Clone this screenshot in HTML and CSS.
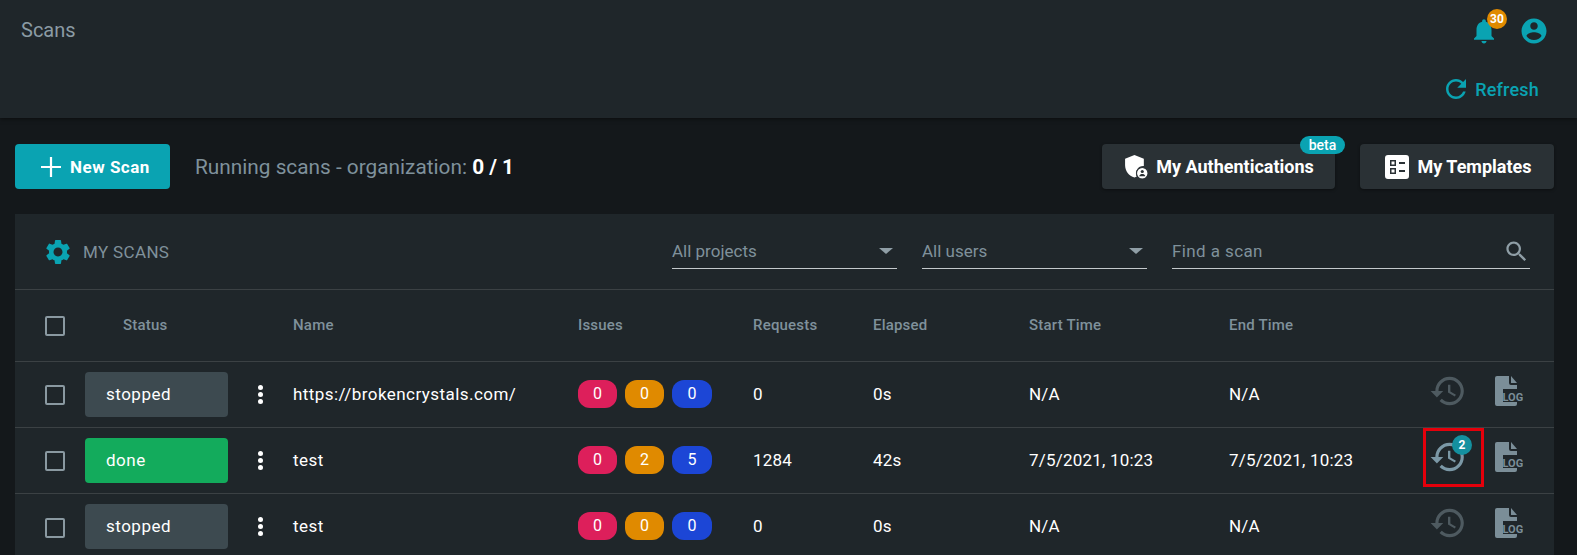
FILE: index.html
```html
<!DOCTYPE html>
<html lang="en">
<head>
<meta charset="utf-8">
<title>Scans</title>
<link rel="stylesheet" href="styles.css">
</head>
<body>
<header class="topbar">
  <div class="topbar-row">
    <h1 class="page-title">Scans</h1>
    <div class="top-icons">
      <span class="bell">
        <svg class="ic-30" viewBox="0 0 24 24"><path d="M12 22c1.1 0 2-.9 2-2h-4c0 1.1.89 2 2 2zm6-6v-5c0-3.07-1.64-5.64-4.5-6.32V4c0-.83-.67-1.5-1.5-1.5s-1.5.67-1.5 1.5v.68C7.63 5.36 6 7.92 6 11v5l-2 2v1h16v-1l-2-2z"/></svg>
        <span class="bell-badge">30</span>
      </span>
      <svg class="ic-30" viewBox="0 0 24 24"><path d="M12 2C6.48 2 2 6.48 2 12s4.48 10 10 10 10-4.48 10-10S17.52 2 12 2zm0 3c1.66 0 3 1.34 3 3s-1.34 3-3 3-3-1.34-3-3 1.34-3 3-3zm0 14.2c-2.5 0-4.71-1.28-6-3.22.03-1.99 4-3.08 6-3.08 1.99 0 5.97 1.09 6 3.08-1.29 1.94-3.5 3.22-6 3.22z"/></svg>
    </div>
  </div>
  <div class="refresh">
    <svg class="ic-30" viewBox="0 0 24 24"><path d="M17.65 6.35C16.2 4.9 14.21 4 12 4c-4.42 0-7.99 3.58-7.99 8s3.57 8 7.99 8c3.73 0 6.84-2.55 7.73-6h-2.08c-.82 2.33-3.04 4-5.65 4-3.31 0-6-2.69-6-6s2.69-6 6-6c1.66 0 3.14.69 4.22 1.78L13 11h7V4l-2.35 2.35z"/></svg>
    <span>Refresh</span>
  </div>
</header>

<main class="main">
  <div class="toolbar">
    <button class="btn-new">
      <svg class="ic-plus" viewBox="0 0 18 18"><path d="M8 0h2v8h8v2h-8v8H8v-8H0V8h8z"/></svg>
      New Scan
    </button>
    <div class="running">Running scans - organization: <b>0 / 1</b></div>
    <div class="toolbar-right">
      <button class="btn-dark btn-auth">
        <svg class="ic-shield" viewBox="0 0 24 24"><path d="M11 1 2 4.500v6.200c0 5.400 3.600 10.300 9 11.800.8-.2 1.500-.5 2.200-.8A7 7 0 0 1 20 11.600V4.500z"/><circle cx="18.500" cy="18.500" r="5.500"/><circle class="cut" cx="18.500" cy="16.800" r="1.500"/><path class="cut" d="M15.500 21.300c.4-1.500 1.800-2.100 3-2.100s2.600.6 3 2.100z"/></svg>
        My Authentications
        <span class="beta">beta</span>
      </button>
      <button class="btn-dark btn-templates">
        <svg class="ic-24" viewBox="0 0 24 24"><path fill-rule="evenodd" d="M3 0h18a3 3 0 0 1 3 3v18a3 3 0 0 1-3 3H3a3 3 0 0 1-3-3V3a3 3 0 0 1 3-3zm2 5v6h6V5zm1.500 1.500h3v3h-3zM14 7v2h6V7zM5 13v6h6v-6zm1.500 1.500h3v3h-3zM14 15v2h6v-2z"/></svg>
        My Templates
      </button>
    </div>
  </div>

  <section class="panel">
    <div class="panel-head">
      <div class="panel-title">
        <svg class="ic-30" viewBox="0 0 24 24"><path d="M19.140 12.940c.04-.3.06-.61.06-.94 0-.32-.02-.64-.07-.94l2.030-1.580c.18-.14.23-.41.12-.61l-1.920-3.320c-.12-.22-.37-.29-.59-.22l-2.390.96c-.5-.38-1.030-.7-1.620-.94l-.36-2.540c-.04-.24-.24-.41-.48-.41h-3.840c-.24 0-.43.17-.47.41l-.36 2.540c-.59.24-1.130.57-1.620.94l-2.390-.96c-.22-.08-.47 0-.59.22L2.740 8.870c-.12.21-.08.47.12.61l2.030 1.580c-.05.3-.09.63-.09.94s.02.64.07.94l-2.030 1.580c-.18.14-.23.41-.12.61l1.920 3.320c.12.22.37.29.59.22l2.390-.96c.5.38 1.030.7 1.620.94l.36 2.540c.05.24.24.41.48.41h3.840c.24 0 .44-.17.47-.41l.36-2.540c.59-.24 1.130-.56 1.620-.94l2.390.96c.22.08.47 0 .59-.22l1.920-3.320c.12-.22.07-.47-.12-.61l-2.010-1.580zM12 15.600c-1.980 0-3.600-1.620-3.600-3.600s1.620-3.600 3.600-3.600 3.600 1.620 3.600 3.600-1.620 3.600-3.600 3.600z"/></svg>
        <span>MY SCANS</span>
      </div>
      <div class="filters">
        <div class="field field-select"><span>All projects</span><i class="caret"></i></div>
        <div class="field field-select"><span>All users</span><i class="caret"></i></div>
        <div class="field field-search"><span>Find a scan</span>
          <svg class="ic-search" viewBox="0 0 24 24"><path d="M15.500 14h-.79l-.28-.27C15.410 12.590 16 11.110 16 9.500 16 5.910 13.090 3 9.500 3S3 5.910 3 9.500 5.910 16 9.500 16c1.610 0 3.090-.59 4.230-1.570l.27.28v.79l5 4.990L20.490 19l-4.990-5zm-6 0C7.010 14 5 11.990 5 9.500S7.010 5 9.500 5 14 7.010 14 9.500 11.990 14 9.500 14z"/></svg>
        </div>
      </div>
    </div>

    <div class="grid-row head-row">
      <i class="check"></i>
      <span class="th-status">Status</span>
      <span>Name</span>
      <span>Issues</span>
      <span>Requests</span>
      <span>Elapsed</span>
      <span>Start Time</span>
      <span>End Time</span>
    </div>

    <div class="grid-row scan-row">
      <i class="check"></i>
      <div class="status-cell"><span class="status stopped">stopped</span><span class="dots"><i></i><i></i><i></i></span></div>
      <span class="name">https://brokencrystals.com/</span>
      <div class="issues"><span class="pill red">0</span><span class="pill orange">0</span><span class="pill blue">0</span></div>
      <span>0</span><span>0s</span><span>N/A</span><span>N/A</span>
      <div class="actions">
        <span class="hist dim"><svg viewBox="0 0 24 24"><path d="M13 3c-4.970 0-9 4.030-9 9H1l3.890 3.890.07.14L9 12H6c0-3.870 3.130-7 7-7s7 3.130 7 7-3.130 7-7 7c-1.930 0-3.680-.79-4.940-2.060l-1.420 1.420C8.270 19.990 10.510 21 13 21c4.970 0 9-4.030 9-9s-4.030-9-9-9zm-1 5v5l4.280 2.540.72-1.210-3.500-2.080V8H12z"/></svg></span>
        <svg class="log" viewBox="0 0 28 30"><path d="M2 0h12v7a2 2 0 0 0 2 2h6v4H8v13h14v2a2 2 0 0 1-2 2H2a2 2 0 0 1-2-2V2a2 2 0 0 1 2-2z"/><path d="M16 0l6 7h-6z"/><text x="7.500" y="25" class="log-text">LOG</text></svg>
      </div>
    </div>

    <div class="grid-row scan-row">
      <i class="check"></i>
      <div class="status-cell"><span class="status done">done</span><span class="dots"><i></i><i></i><i></i></span></div>
      <span class="name">test</span>
      <div class="issues"><span class="pill red">0</span><span class="pill orange">2</span><span class="pill blue">5</span></div>
      <span>1284</span><span>42s</span><span>7/5/2021, 10:23</span><span>7/5/2021, 10:23</span>
      <div class="actions">
        <span class="hist bright"><svg viewBox="0 0 24 24"><path d="M13 3c-4.970 0-9 4.030-9 9H1l3.890 3.890.07.14L9 12H6c0-3.870 3.130-7 7-7s7 3.130 7 7-3.130 7-7 7c-1.930 0-3.680-.79-4.940-2.060l-1.420 1.420C8.270 19.990 10.510 21 13 21c4.970 0 9-4.030 9-9s-4.030-9-9-9zm-1 5v5l4.280 2.540.72-1.210-3.500-2.080V8H12z"/></svg><span class="hist-badge">2</span><span class="annotation"></span></span>
        <svg class="log" viewBox="0 0 28 30"><path d="M2 0h12v7a2 2 0 0 0 2 2h6v4H8v13h14v2a2 2 0 0 1-2 2H2a2 2 0 0 1-2-2V2a2 2 0 0 1 2-2z"/><path d="M16 0l6 7h-6z"/><text x="7.500" y="25" class="log-text">LOG</text></svg>
      </div>
    </div>

    <div class="grid-row scan-row">
      <i class="check"></i>
      <div class="status-cell"><span class="status stopped">stopped</span><span class="dots"><i></i><i></i><i></i></span></div>
      <span class="name">test</span>
      <div class="issues"><span class="pill red">0</span><span class="pill orange">0</span><span class="pill blue">0</span></div>
      <span>0</span><span>0s</span><span>N/A</span><span>N/A</span>
      <div class="actions">
        <span class="hist dim"><svg viewBox="0 0 24 24"><path d="M13 3c-4.970 0-9 4.030-9 9H1l3.890 3.890.07.14L9 12H6c0-3.870 3.130-7 7-7s7 3.130 7 7-3.130 7-7 7c-1.930 0-3.680-.79-4.940-2.060l-1.420 1.420C8.270 19.990 10.510 21 13 21c4.970 0 9-4.030 9-9s-4.030-9-9-9zm-1 5v5l4.280 2.540.72-1.210-3.500-2.080V8H12z"/></svg></span>
        <svg class="log" viewBox="0 0 28 30"><path d="M2 0h12v7a2 2 0 0 0 2 2h6v4H8v13h14v2a2 2 0 0 1-2 2H2a2 2 0 0 1-2-2V2a2 2 0 0 1 2-2z"/><path d="M16 0l6 7h-6z"/><text x="7.500" y="25" class="log-text">LOG</text></svg>
      </div>
    </div>
  </section>
</main>
</body>
</html>
```

FILE: styles.css
```css
* { box-sizing: border-box; }
html { overflow: hidden; }
body {
  margin: 0;
  height: 555px;
  overflow: hidden;
  background: #14181b;
  color: #fff;
  font-family: Roboto, "Liberation Sans", sans-serif;
  font-size: 17px;
}
svg { fill: currentColor; display: block; flex: none; }
.ic-30 { width: 30px; height: 30px; }
.ic-24 { width: 24px; height: 24px; }
.ic-shield { width: 25px; height: 25px; }

.topbar {
  height: 118px;
  background: #1f262a;
  box-shadow: 0 1px 4px rgba(0,0,0,.5);
  color: #0aa3b2;
  display: flex;
  flex-direction: column;
}
.topbar-row {
  display: flex;
  justify-content: space-between;
  padding: 16px 28px 0 21px;
  height: 74px;
}
.page-title {
  margin: 0;
  font-size: 20px;
  font-weight: 400;
  line-height: 28px;
  color: #8b9ba4;
}
.top-icons { display: flex; align-items: flex-start; gap: 20px; }
.bell { position: relative; display: block; }
.bell-badge {
  position: absolute;
  left: 18px;
  top: -7px;
  width: 20px;
  height: 20px;
  border-radius: 50%;
  background: #e08a00;
  color: #fff;
  font-size: 12px;
  font-weight: 700;
  line-height: 20px;
  text-align: center;
}
.refresh {
  display: flex;
  align-items: center;
  justify-content: flex-end;
  gap: 4px;
  padding-right: 38px;
  font-size: 18px;
  font-weight: 500;
  letter-spacing: .2px;
}

.main { padding: 0 23px 0 15px; }
.toolbar {
  display: flex;
  align-items: center;
  height: 96px;
  padding-top: 1px;
}
button { font: inherit; border: 0; cursor: pointer; }
.btn-new {
  width: 155px;
  height: 45px;
  padding: 0 0 0 26px;
  background: #0aa3b2;
  color: #fff;
  border-radius: 4px;
  display: flex;
  align-items: center;
  gap: 9px;
  font-size: 17px;
  font-weight: 700;
  letter-spacing: .5px;
}
.ic-plus { width: 20px; height: 20px; }
.running {
  margin-left: 25px;
  font-size: 20.8px;
  color: #7f919b;
}
.running b { color: #fff; font-weight: 700; }
.toolbar-right { margin-left: auto; display: flex; gap: 25px; }
.btn-dark {
  position: relative;
  height: 45px;
  background: #2a3135;
  color: #fff;
  border-radius: 4px;
  display: flex;
  align-items: center;
  justify-content: center;
  gap: 8px;
  font-size: 18px;
  font-weight: 700;
  box-shadow: 0 1px 3px rgba(0,0,0,.4);
}
.btn-auth { width: 233px; }
.btn-templates { width: 194px; padding: 0 0 0 3px; }
.cut { fill: #2a3135; }
.btn-auth circle:not(.cut) { fill: #fff; stroke: #2a3135; stroke-width: 1; }
.beta {
  position: absolute;
  right: -10px;
  top: -8px;
  width: 45px;
  height: 18px;
  border-radius: 9px;
  background: #0aa3b2;
  color: #fff;
  font-size: 14px;
  font-weight: 500;
  line-height: 18px;
  text-align: center;
}

.panel { background: #1f262a; height: 341px; overflow: hidden; }
.panel-head {
  height: 76px;
  border-bottom: 1px solid #3b4144;
  display: flex;
  align-items: center;
  justify-content: space-between;
  padding: 0 24px 0 28px;
}
.panel-title {
  display: flex;
  align-items: center;
  gap: 10px;
  color: #0aa3b2;
}
.panel-title span { color: #7f919b; font-size: 17px; letter-spacing: .35px; }
.filters { display: flex; gap: 25px; }
.field {
  height: 34px;
  border-bottom: 1px solid #c4c9cc;
  display: flex;
  align-items: center;
  justify-content: space-between;
  color: #7f919b;
  font-size: 17px;
}
.field-select { width: 225px; }
.field-search { width: 358px; letter-spacing: .4px; }
.caret {
  width: 0;
  height: 0;
  margin-right: 4px;
  border-left: 7px solid transparent;
  border-right: 7px solid transparent;
  border-top: 6px solid #8f9ea6;
}
.ic-search { width: 27px; height: 27px; color: #8f9ea6; }

.grid-row {
  display: grid;
  grid-template-columns: 40px 208px 285px 175px 120px 156px 200px 195px 1fr;
  margin-left: 30px;
}
.check {
  display: block;
  width: 20px;
  height: 20px;
  border: 2px solid #8a99a1;
  border-radius: 2px;
}
.head-row {
  height: 72px;
  padding-top: 26px;
  color: #7f919b;
  font-size: 15px;
  font-weight: 500;
  letter-spacing: .2px;
  position: relative;
}
.th-status { padding-left: 38px; }
.head-row::after, .scan-row::after {
  content: "";
  position: absolute;
  left: -30px;
  width: 1539px;
  bottom: 0;
  height: 1px;
  background: #3b4144;
}
.scan-row {
  position: relative;
  height: 66px;
  padding-bottom: 2px;
  align-items: center;
  font-size: 17px;
  letter-spacing: .2px;
  color: #fff;
}
.scan-row .check { margin-top: 2px; }
.scan-row:last-child .check { margin-top: 4px; }
.name { letter-spacing: .45px; }
.status-cell { display: flex; align-items: center; }
.status {
  width: 143px;
  height: 45px;
  border-radius: 4px;
  padding-left: 21px;
  display: flex;
  align-items: center;
  font-size: 17px;
  letter-spacing: .5px;
  color: #fff;
}
.stopped { background: #3d4a50; }
.done { background: #13ab5c; }
.dots { display: flex; flex-direction: column; gap: 2px; margin-left: 30px; }
.dots i { width: 5px; height: 5px; border-radius: 50%; background: #fff; }
.issues { display: flex; gap: 8px; }
.pill {
  width: 39px;
  height: 28px;
  border-radius: 12px;
  text-align: center;
  line-height: 28px;
  font-size: 16px;
}
.pill.blue { width: 40px; background: #1c46d6; }
.red { background: #dd1f5b; }
.orange { background: #e08a00; }
.actions {
  display: flex;
  align-items: center;
  gap: 28px;
  margin-left: 5px;
  padding-bottom: 7px;
  color: #7b8e98;
}
.hist { position: relative; display: block; width: 38px; height: 38px; }
.hist svg { width: 38px; height: 38px; }
.hist.dim { color: #4e5a60; }
.hist.bright { color: #7b98a6; }
.hist-badge {
  position: absolute;
  left: 23px;
  top: -3px;
  width: 20px;
  height: 20px;
  border-radius: 50%;
  background: #14909f;
  color: #fff;
  font-size: 12px;
  font-weight: 700;
  line-height: 20px;
  text-align: center;
}
.annotation {
  position: absolute;
  left: -6px;
  top: -10px;
  width: 61px;
  height: 59px;
  border: 3px solid #e5000b;
}
.log { width: 28px; height: 30px; }
.log-text { font-family: Roboto, sans-serif; font-size: 11px; font-weight: 700; letter-spacing: 0; fill: currentColor; }
```
